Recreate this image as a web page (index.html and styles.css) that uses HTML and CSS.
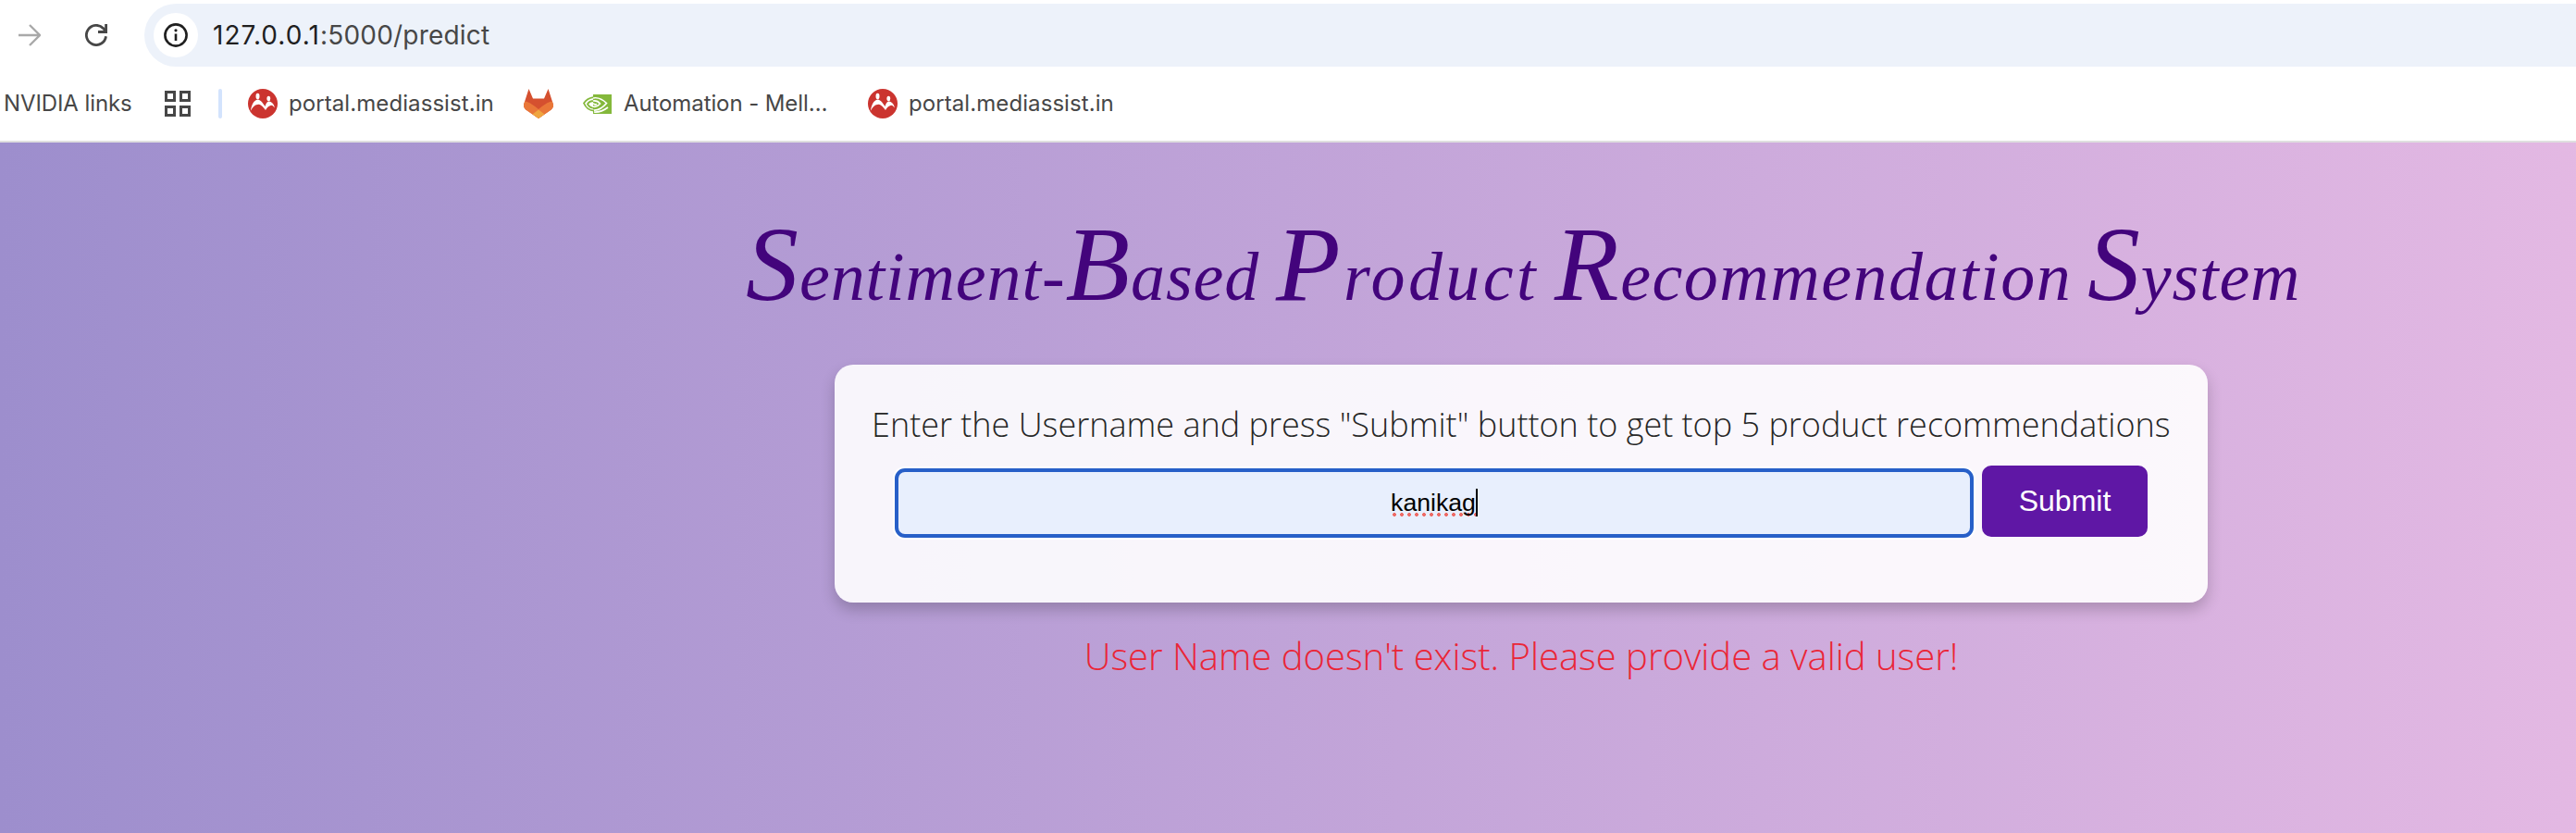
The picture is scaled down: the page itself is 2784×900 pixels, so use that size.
FILE: index.html
```html
<!DOCTYPE html>
<html lang="en">
<head>
<meta charset="utf-8">
<title>Sentiment-Based Product Recommendation System</title>
<link rel="stylesheet" href="styles.css">
</head>
<body>
<svg class="defs" aria-hidden="true">
  <symbol id="mediassist" viewBox="0 0 32 32">
    <circle cx="16" cy="16" r="16" fill="#cb342f"/>
    <g fill="#fff">
      <ellipse cx="10.5" cy="8" rx="2" ry="3.2"/>
      <ellipse cx="22.3" cy="10.5" rx="1.9" ry="2.8"/>
      <path d="M2.8 24C4 17 6 12.500 10.500 11.500C14 12 16.500 16 18.500 19C19.500 15.500 20.500 14 22.500 13.500C26 14 28.300 16.500 28.800 20.500C27 18 25.500 17.500 24.500 18C22 18.500 20.500 20.500 19 23C17 20.500 14.500 17 11.500 16.700C8 16.700 5 19.500 2.800 24Z"/>
    </g>
  </symbol>
</svg>
<header class="chrome">
  <div class="toolbar">
    <svg class="forward" viewBox="0 0 24 24"><path d="M0 12H22M12 1L23 12L12 23" fill="none" stroke="#a9a9a9" stroke-width="2.400"/></svg>
    <svg class="reload" viewBox="0 0 24 24"><path d="M22.500 13.300A10.600 10.600 0 1 1 19.800 4.800L22.500 7.800" fill="none" stroke="#474747" stroke-width="2.800"/><path d="M22.600 0V8.500H14" fill="none" stroke="#474747" stroke-width="2.800"/></svg>
    <div class="address">
      <span class="site-info"><svg viewBox="0 0 26 26"><circle cx="13" cy="13" r="11.600" fill="none" stroke="#1f1f1f" stroke-width="2.600"/><circle cx="13" cy="7.800" r="1.600" fill="#1f1f1f"/><path d="M13 11.500V19" stroke="#1f1f1f" stroke-width="2.600"/></svg></span>
      <span class="url"><span class="host">127.0.0.1</span>:5000/predict</span>
    </div>
  </div>
  <nav class="bookmarks">
    <span class="label nvlinks">NVIDIA links</span>
    <svg class="grid" viewBox="0 0 28 28"><path d="M1.500 1.500H10.500V10.500H1.500ZM17.500 1.500H26.500V10.500H17.500ZM1.500 17.500H10.500V26.500H1.500ZM17.500 17.500H26.500V26.500H17.500Z" fill="none" stroke="#474747" stroke-width="3"/></svg>
    <span class="divider"></span>
    <svg class="fav"><use href="#mediassist"/></svg>
    <span class="label portal">portal.mediassist.in</span>
    <svg class="fav gitlab" viewBox="0 0 32 32"><path d="M5.500 0L10 10.500H22L26.500 0L32 17C32.500 19 31 21.500 29 23L16 32L3 23C1 21.500 -.500 19 0 17Z" fill="#d5502f"/><path d="M0 17L1.200 13.500C6 14 11 18 16 22C21 18 26 14 30.800 13.500L32 17C32.500 19 31 21.500 29 23L16 32L3 23C1 21.500 -.500 19 0 17Z" fill="#e97739"/><path d="M16 22.500L22.500 27.500L16 32L9.500 27.500Z" fill="#efa640"/></svg>
    <svg class="nvidia" viewBox="0 0 31 21"><path d="M11 0H31V21H11Z" fill="#84b83b"/><path d="M11 4C16 3 21 5 25.500 9.500C21 15 16 17.500 11 17" fill="none" stroke="#fff" stroke-width="1.700"/><path d="M11 3.200C6.500 4 3 6.500 1 9.500C3 14 7 17.500 12 17.600M12 7C8 7 6 8.500 5 10.500C7 14 10 14.800 13 14.500C17 14 19 11 20 9.500C18 6.500 15 5 11 6" fill="none" stroke="#84b83b" stroke-width="1.800"/><path d="M11 7C15 6.500 17 8 18.500 10C16 13 13 13.700 11 13C8.500 12 9 10 11 10C13 10 12.500 12 15 10.500M12 19C18 19.500 23 17 27 14" fill="none" stroke="#fff" stroke-width="1.700"/></svg>
    <span class="label automation">Automation - Mell…</span>
    <svg class="fav"><use href="#mediassist"/></svg>
    <span class="label portal">portal.mediassist.in</span>
  </nav>
</header>
<main class="page">
  <h1 class="title"><span class="word w1"><b>S</b>entiment-<b>B</b>ased</span> <span class="word w2"><b>P</b>roduct</span> <span class="word w3"><b>R</b>ecommendation</span> <span class="word w4"><b>S</b>ystem</span></h1>
  <section class="card">
    <p class="prompt">Enter the Username and press "Submit" button to get top 5 product recommendations</p>
    <form class="form">
      <div class="field"><span class="value">kanikag</span><span class="caret"></span></div>
      <button class="submit" type="button">Submit</button>
    </form>
  </section>
  <p class="error">User Name doesn't exist. Please provide a valid user!</p>
</main>
</body>
</html>
```
FILE: styles.css
```css
* { box-sizing: border-box; }
body { margin: 0; width: 2784px; height: 900px; overflow: hidden; background: #fff; }
svg { display: block; flex: none; }
.defs { display: none; }
.chrome { height: 154px; border-bottom: 2px solid #dfdfdf; padding-top: 4px; font-family: Inter, sans-serif; color: #474747; }
.toolbar { display: flex; align-items: center; height: 68px; padding-left: 20px; }
.forward { width: 24px; height: 24px; }
.reload { width: 24px; height: 24px; margin-left: 48px; }
.address { display: flex; align-items: center; flex: 1; height: 68px; margin-left: 40px; padding-left: 10px; background: #edf2fa; border-radius: 34px 0 0 34px; }
.site-info { display: grid; place-items: center; width: 48px; height: 48px; border-radius: 50%; background: #fff; }
.site-info svg { width: 26px; height: 26px; }
.url { margin-left: 16px; font-size: 28px; white-space: nowrap; letter-spacing: .2px; }
.host { color: #1f1f1f; letter-spacing: 1.05px; }
.bookmarks { display: flex; align-items: center; height: 80px; padding-left: 4px; }
.label { font-size: 24px; line-height: 32px; white-space: nowrap; flex: none; }
.nvlinks { width: 174px; letter-spacing: -.1px; }
.grid { width: 28px; height: 28px; }
.divider { width: 4px; height: 32px; margin: 0 28px 0 30px; border-radius: 2px; background: #d3e3fd; }
.fav { width: 32px; height: 32px; }
.portal { width: 254px; margin-left: 12px; letter-spacing: .08px; }
.nvidia { width: 31px; height: 21px; margin-left: 32px; }
.automation { width: 264px; margin-left: 13px; letter-spacing: -.1px; }
.page { display: flex; flex-direction: column; align-items: center; width: 2784px; height: 746px; padding-left: 504px; background: linear-gradient(to right, #9d8ecd, #f0c0e7) 0 0 / 3288px 100% no-repeat; }
.title { display: flex; align-items: baseline; width: 1676px; height: 160px; margin: 80px 0 0; font: italic 400 74px/130px "Liberation Serif", serif; color: #43047c; white-space: nowrap; }
.title b { font-size: 114px; font-weight: 400; line-height: 1px; }
.word { flex: none; }
.w1 { width: 573px; letter-spacing: .9px; }
.w2 { width: 301px; letter-spacing: 3.4px; }
.w3 { width: 576px; letter-spacing: 1.5px; }
.w4 { letter-spacing: .8px; }
.card { width: 1484px; height: 257px; padding: 38px 40px 0; border-radius: 20px; background: rgba(255,255,255,.9); box-shadow: 0 8px 16px rgba(0,0,0,.2); }
.prompt { margin: 0; font: 300 36px/54px "Open Sans", sans-serif; color: #262626; white-space: nowrap; }
.form { display: flex; align-items: flex-start; margin: 17px 0 0 25px; gap: 9px; }
.field { display: flex; flex: none; align-items: center; justify-content: center; width: 1166px; height: 75px; margin-top: 3px; padding-bottom: 1px; border: 4px solid #275fc8; border-radius: 11px; background: #e8effd; box-shadow: 0 0 0 2px #fff; font: 26.67px/30px "Liberation Sans", Arial, sans-serif; color: #000; }
.value { background: radial-gradient(circle, #ee6b66 1.8px, transparent 2.2px) 0 26px / 8px 4px repeat-x; }
.caret { width: 2px; height: 30px; background: #000; }
.submit { flex: none; width: 179px; height: 77px; padding: 0; border: 0; border-radius: 10px; background: #5f17a5; color: #fff; font: 32px "Liberation Sans", Arial, sans-serif; }
.error { margin: 29px 0 0; font: 300 40px/58px "Open Sans", sans-serif; color: #ea2637; }
```
